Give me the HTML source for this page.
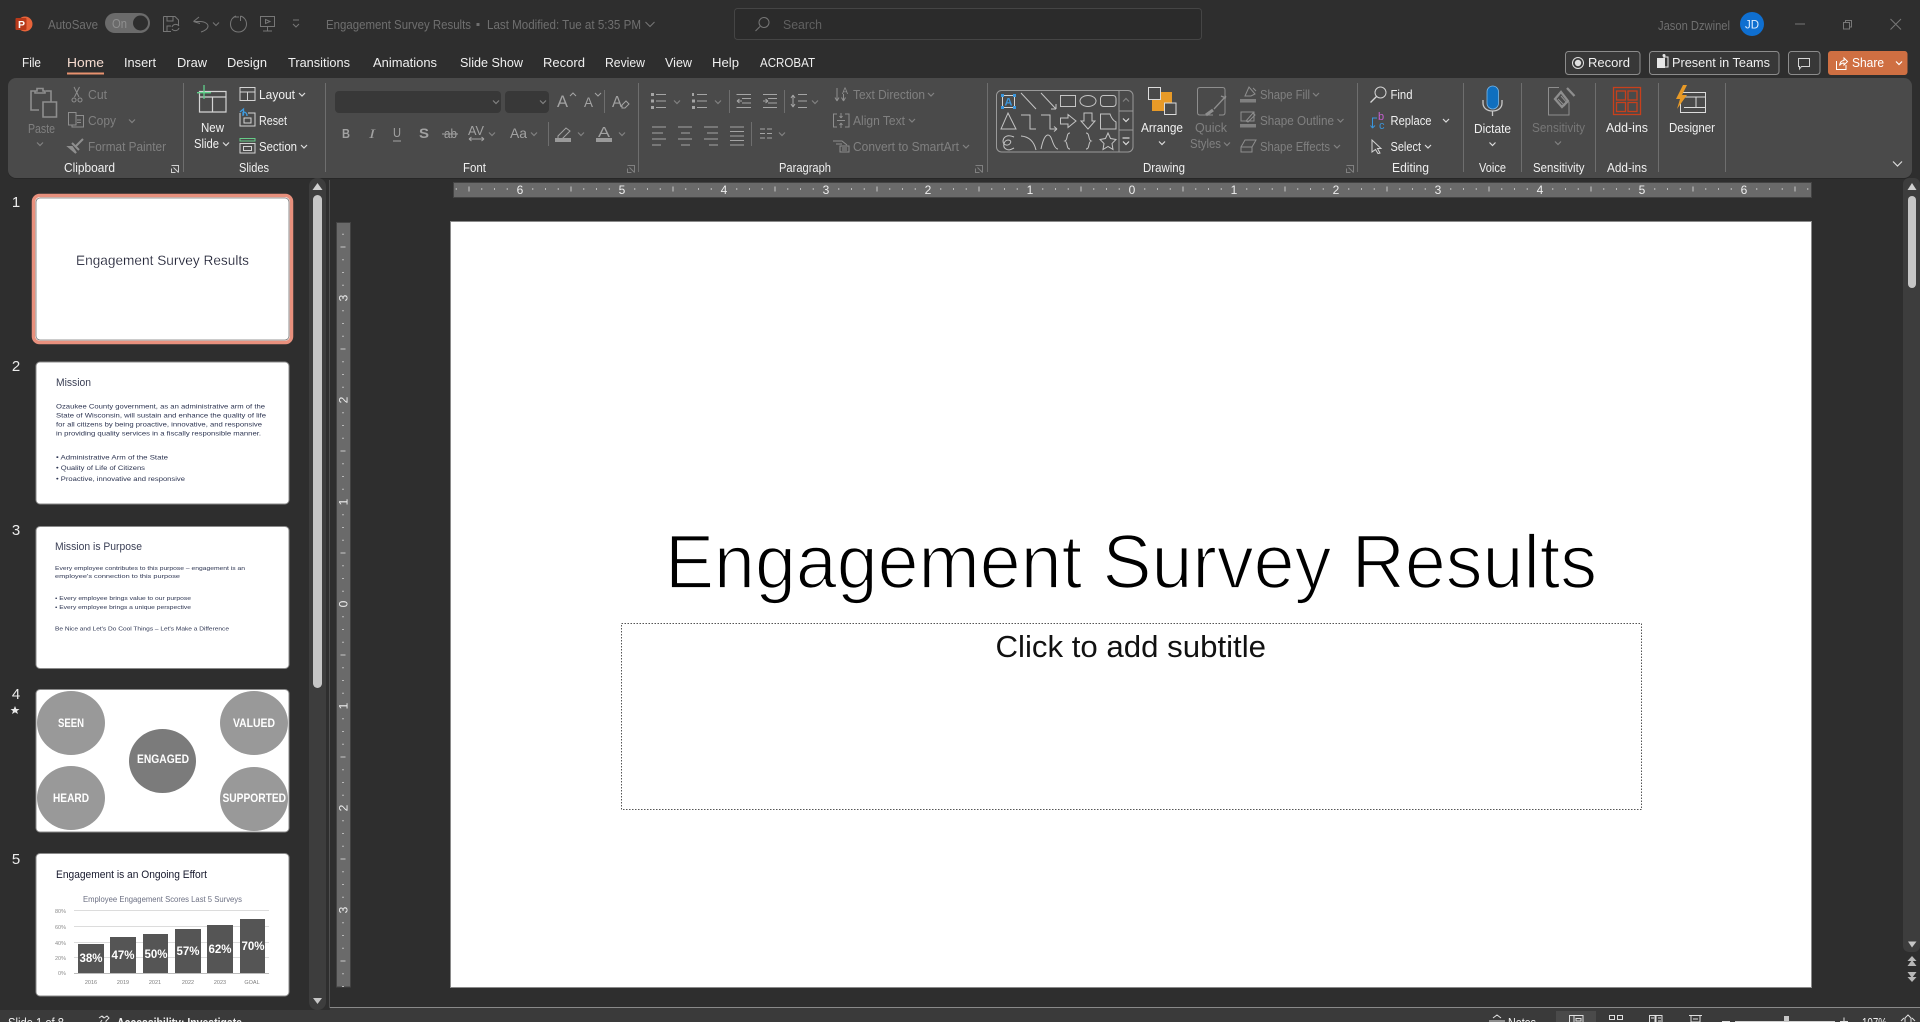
<!DOCTYPE html>
<html lang="en"><head><meta charset="utf-8"><title>Engagement Survey Results - PowerPoint</title>
<style>
html,body{margin:0;padding:0;width:1920px;height:1022px;overflow:hidden;background:#2e2e2e}
svg{display:block;font-family:"Liberation Sans",sans-serif}
text{white-space:pre}
.t text,text.t{fill:#f0f0f0;font-size:12.5px}
.d text,text.d{fill:#808080;font-size:12.5px}
.dl text{fill:#a2a2a2;font-size:12.5px}
.h text{fill:#6f6f6f;font-size:12.5px}
.tb text{fill:#f0f0f0;font-size:12.5px}
.ie{fill:none;stroke:#d4d4d4;stroke-width:1}
.id{fill:none;stroke:#8e8e8e;stroke-width:1}
.il{fill:none;stroke:#a4a4a4;stroke-width:1}
.ih{fill:none;stroke:#777;stroke-width:1}
.cw{fill:none;stroke:#dcdcdc;stroke-width:1.2}
.cd{fill:none;stroke:#828282;stroke-width:1.2}
.r text{fill:#ededed;font-size:12px;text-anchor:middle}
.th text{fill:#2b3350;font-size:6.6px}
.cl text{fill:#fff;font-size:11.5px;font-weight:bold}
</style></head><body>
<svg width="1920" height="1022" viewBox="0 0 1920 1022" xmlns="http://www.w3.org/2000/svg">
<defs>
<path id="c" d="M-3-1.5 0 1.5 3-1.5"/>
<path id="l" d="M0 0H7V7M7 7 2 2M0 3V7H4" />
<pattern id="hr" patternUnits="userSpaceOnUse" x="1132" y="182" width="102" height="15">
<rect x="12.25" y="6" width="1" height="2" fill="#b8b8b8"/><rect x="25" y="6" width="1" height="2" fill="#b8b8b8"/><rect x="37.75" y="6" width="1" height="2" fill="#b8b8b8"/><rect x="50.5" y="4.5" width="1" height="5" fill="#c8c8c8"/><rect x="63.25" y="6" width="1" height="2" fill="#b8b8b8"/><rect x="76" y="6" width="1" height="2" fill="#b8b8b8"/><rect x="88.75" y="6" width="1" height="2" fill="#b8b8b8"/>
</pattern>
<pattern id="vr" patternUnits="userSpaceOnUse" x="336" y="604" width="15" height="102">
<rect x="6" y="12.25" width="2" height="1" fill="#b8b8b8"/><rect x="6" y="25" width="2" height="1" fill="#b8b8b8"/><rect x="6" y="37.75" width="2" height="1" fill="#b8b8b8"/><rect x="4.5" y="50.5" width="5" height="1" fill="#c8c8c8"/><rect x="6" y="63.25" width="2" height="1" fill="#b8b8b8"/><rect x="6" y="76" width="2" height="1" fill="#b8b8b8"/><rect x="6" y="88.75" width="2" height="1" fill="#b8b8b8"/>
</pattern>
</defs>

<rect width="1920" height="1022" fill="#2e2e2e"/>

<!-- Title bar -->
<circle cx="25" cy="24" r="7.5" fill="#e8643a"/><rect x="15.5" y="18" width="11" height="12" rx="1" fill="#b7391a"/>
<text x="18" y="28" font-size="10.5" font-weight="bold" fill="#fff">P</text>
<g class="h"><text x="48" y="29" textLength="50" lengthAdjust="spacingAndGlyphs">AutoSave</text></g>
<rect x="105" y="13" width="45" height="20" rx="10" fill="#6b6b6b"/><circle cx="140.5" cy="23" r="7.5" fill="#2e2e2e"/>
<text x="112" y="28" font-size="12.5" fill="#8f8f8f" textLength="15" lengthAdjust="spacingAndGlyphs">On</text>
<g class="ih">
<path d="M163.5 16.5H175L178.5 20V26M163.5 16.5V31.500H171M167 16.5V21H173V16.500M167 31V26H171"/>
<path d="M172 27A4 4 0 0 1 179 26M179 28A4 4 0 0 1 172 29"/>
<path d="M193.500 21.500 199 17M193.500 21.500 200 23.500M194 21.500H200C205 21.500 208 24 208 26C208 29 204 31 201 32"/>
<use href="#c" x="216" y="24"/>
<path d="M239 17H233.500M236 16C232 17.500 230.500 21 230.500 24C230.500 29 234 32 238.500 32C243.500 32 246.500 28 246.500 24C246.500 20 244 17 240.500 16M240.500 16V21"/>
<path d="M260.500 16.500H274.500V26.500H260.500ZM267.500 26.500V31M263 31H272M265.500 19.500 270 21.500 265.500 23.500Z"/>
<path d="M293 20H299M293 24 296 27 299 24"/>
</g>
<g class="h"><text x="326" y="29" textLength="145" lengthAdjust="spacingAndGlyphs">Engagement Survey Results</text>
<text x="487" y="29" textLength="154" lengthAdjust="spacingAndGlyphs">Last Modified: Tue at 5:35 PM</text></g>
<rect x="476.500" y="23" width="3" height="3" fill="#6f6f6f"/>
<path class="ih" d="M645.500 22 650 26.500 654.500 22"/>
<rect x="734.500" y="8.500" width="467" height="31" rx="3" fill="#2b2b2b" stroke="#454545"/>
<circle cx="764" cy="22.500" r="5" class="ih"/><path class="ih" d="M760 26.500 755.500 31"/>
<g class="h"><text x="783" y="29" textLength="39" lengthAdjust="spacingAndGlyphs" style="fill:#606060">Search</text></g>
<g class="h"><text x="1658" y="30" textLength="72" lengthAdjust="spacingAndGlyphs">Jason Dzwinel</text></g>
<circle cx="1752" cy="24" r="12" fill="#0f6fd0"/><text x="1752" y="28.500" font-size="11.500" fill="#dfeeff" text-anchor="middle">JD</text>
<path class="ih" d="M1795 24H1805M1843.500 22.500H1849.500V29H1843.500ZM1845.500 22.500V20.500H1851.500V27H1849.500M1890.500 19 1901 29.500M1901 19 1890.500 29.500"/>

<!-- Tabs -->
<g class="tb">
<text x="22" y="67" textLength="19" lengthAdjust="spacingAndGlyphs">File</text>
<text x="67" y="67" textLength="37" lengthAdjust="spacingAndGlyphs" style="fill:#f5dcd0">Home</text>
<text x="124" y="67" textLength="32" lengthAdjust="spacingAndGlyphs">Insert</text>
<text x="177" y="67" textLength="30" lengthAdjust="spacingAndGlyphs">Draw</text>
<text x="227" y="67" textLength="40" lengthAdjust="spacingAndGlyphs">Design</text>
<text x="288" y="67" textLength="62" lengthAdjust="spacingAndGlyphs">Transitions</text>
<text x="373" y="67" textLength="64" lengthAdjust="spacingAndGlyphs">Animations</text>
<text x="460" y="67" textLength="63" lengthAdjust="spacingAndGlyphs">Slide Show</text>
<text x="543" y="67" textLength="42" lengthAdjust="spacingAndGlyphs">Record</text>
<text x="605" y="67" textLength="40" lengthAdjust="spacingAndGlyphs">Review</text>
<text x="665" y="67" textLength="27" lengthAdjust="spacingAndGlyphs">View</text>
<text x="712" y="67" textLength="27" lengthAdjust="spacingAndGlyphs">Help</text>
<text x="760" y="67" textLength="55" lengthAdjust="spacingAndGlyphs">ACROBAT</text>
</g>
<rect x="67" y="72.500" width="37" height="2" fill="#e8926f"/>

<!-- Top right buttons -->
<rect x="1565.500" y="51.500" width="74.500" height="23" rx="3" fill="#383838" stroke="#8c8c8c"/>
<circle cx="1578" cy="63" r="5.500" fill="none" stroke="#e0e0e0"/><circle cx="1578" cy="63" r="3.200" fill="#e0e0e0"/>
<rect x="1649.500" y="51.500" width="129.500" height="23" rx="3" fill="#383838" stroke="#8c8c8c"/>
<rect x="1657" y="58" width="8" height="10" fill="#e6e6e6"/><rect x="1664" y="57" width="4" height="10" fill="none" stroke="#e6e6e6"/><circle cx="1664" cy="55.500" r="1.500" fill="#e6e6e6"/>
<rect x="1788.500" y="51.500" width="31.500" height="23" rx="3" fill="#383838" stroke="#8c8c8c"/>
<path class="ie" d="M1798.500 58.500H1809.500V66.500H1801.500L1799.500 69V66.500H1798.500Z"/>
<rect x="1828" y="51" width="79.500" height="24" rx="3" fill="#cf6f42"/>
<path fill="none" stroke="#fff" d="M1836.500 61V69.500H1846V65M1839.500 65.500C1840 62.500 1841.500 60.500 1844 60.500V58L1847.500 61.500 1844 65V63C1842 63 1840.500 64 1839.500 65.500Z"/>
<use href="#c" x="1899" y="63" fill="none" stroke="#fff" stroke-width="1.2"/>
<g class="tb"><text x="1588" y="67" textLength="42" lengthAdjust="spacingAndGlyphs">Record</text>
<text x="1672" y="67" textLength="98" lengthAdjust="spacingAndGlyphs">Present in Teams</text>
<text x="1852" y="67" textLength="32" lengthAdjust="spacingAndGlyphs" style="fill:#fff">Share</text></g>

<!-- Ribbon -->
<rect x="8" y="79" width="1904" height="100" rx="8" fill="#232323" opacity=".6"/>
<rect x="8" y="78" width="1904" height="100" rx="8" fill="#4a4a4a"/>
<g fill="#6e6e6e">
<rect x="183" y="83" width="1" height="89"/><rect x="325" y="83" width="1" height="89"/><rect x="638" y="83" width="1" height="89"/><rect x="987" y="83" width="1" height="89"/><rect x="1357" y="83" width="1" height="89"/><rect x="1463" y="83" width="1" height="89"/><rect x="1521" y="83" width="1" height="89"/><rect x="1595" y="83" width="1" height="89"/><rect x="1658" y="83" width="1" height="89"/><rect x="1725" y="83" width="1" height="89"/>
<rect x="604" y="90" width="1" height="23"/><rect x="548" y="122" width="1" height="24"/><rect x="729" y="90" width="1" height="23"/><rect x="784" y="90" width="1" height="23"/><rect x="751" y="122" width="1" height="24"/>
</g>

<!-- Group labels -->
<g class="t">
<text x="64" y="172" textLength="51" lengthAdjust="spacingAndGlyphs">Clipboard</text>
<text x="239" y="172" textLength="30" lengthAdjust="spacingAndGlyphs">Slides</text>
<text x="463" y="172" textLength="23" lengthAdjust="spacingAndGlyphs">Font</text>
<text x="779" y="172" textLength="52" lengthAdjust="spacingAndGlyphs">Paragraph</text>
<text x="1143" y="172" textLength="42" lengthAdjust="spacingAndGlyphs">Drawing</text>
<text x="1392" y="172" textLength="37" lengthAdjust="spacingAndGlyphs">Editing</text>
<text x="1479" y="172" textLength="27" lengthAdjust="spacingAndGlyphs">Voice</text>
<text x="1533" y="172" textLength="51.500" lengthAdjust="spacingAndGlyphs">Sensitivity</text>
<text x="1607" y="172" textLength="40" lengthAdjust="spacingAndGlyphs">Add-ins</text>
</g>
<use href="#l" x="171.500" y="165.500" fill="none" stroke="#d0d0d0"/>
<g fill="none" stroke="#808080"><use href="#l" x="627.500" y="165.500"/><use href="#l" x="975.500" y="165.500"/><use href="#l" x="1346.500" y="165.500"/></g>

<!-- Clipboard -->
<g class="id" stroke-width="1.2">
<path stroke-width="1.6" d="M46 91H51V102M39 110H31V91H37M37 91V88.500H43V91H45V93H35V91ZM43 102H56.500V117H43Z"/>
<path d="M74 87 79 97M79.500 87 74.500 97"/><circle cx="74" cy="100" r="2"/><circle cx="80" cy="100" r="2"/>
<path d="M68.500 112.500H76V125H68.500ZM76.500 115.500H83.500V127H72V125M77 120H81M77 122.500H81"/>
<path stroke-width="2" d="M83 139 75 147M72 143 79 150M69 147 76 153 72 147Z"/>
</g>
<g class="d">
<text x="28" y="133" textLength="27" lengthAdjust="spacingAndGlyphs">Paste</text>
<text x="88" y="99" textLength="19" lengthAdjust="spacingAndGlyphs">Cut</text>
<text x="88" y="125" textLength="28" lengthAdjust="spacingAndGlyphs">Copy</text>
<text x="88" y="151" textLength="78" lengthAdjust="spacingAndGlyphs">Format Painter</text>
</g>
<g class="cd"><use href="#c" x="40" y="144"/><use href="#c" x="132" y="121"/></g>

<!-- Slides -->
<g class="ie">
<path stroke-width="1.200" d="M199.500 91.500H226V112H199.500ZM199.500 97H226M212.500 97V112"/>
<path d="M240 87.500H255V100.500H240ZM240 92H255M247.500 92V100.500"/>
<path d="M240 113V126H255V113H248M244 118H251V123H244Z"/>
<path d="M240 143.500H255V153H240ZM243.500 146.500H251.500V150.500H243.500Z"/>
</g>
<path fill="none" stroke="#5fd08a" stroke-width="1.300" d="M197 92.700H211M204 85V99"/>
<path fill="none" stroke="#3d9be0" stroke-width="1.300" d="M243 112V116M240 112 243.500 109 243.500 115M243.500 112C246 112 247 114 247 116"/>
<rect x="240" y="138.500" width="15" height="2.500" fill="none" stroke="#66cc88"/>
<g class="t">
<text x="201" y="132" textLength="23" lengthAdjust="spacingAndGlyphs">New</text>
<text x="194" y="148" textLength="25" lengthAdjust="spacingAndGlyphs">Slide</text>
<text x="259" y="99" textLength="36" lengthAdjust="spacingAndGlyphs">Layout</text>
<text x="259" y="125" textLength="28" lengthAdjust="spacingAndGlyphs">Reset</text>
<text x="259" y="151" textLength="38" lengthAdjust="spacingAndGlyphs">Section</text>
</g>
<g class="cw"><use href="#c" x="226" y="144"/><use href="#c" x="302" y="94.500"/><use href="#c" x="304" y="146.500"/></g>

<!-- Font -->
<rect x="335" y="91" width="166" height="22" rx="4" fill="#383838"/><rect x="505" y="91" width="44" height="22" rx="4" fill="#383838"/>
<g class="cd">
<use href="#c" x="496" y="102"/><use href="#c" x="543" y="102"/>
<use href="#c" x="492" y="134"/><use href="#c" x="534" y="134"/><use href="#c" x="581" y="134"/><use href="#c" x="622" y="134"/>
</g>
<g class="dl">
<text x="557" y="107" style="font-size:17px" textLength="11" lengthAdjust="spacingAndGlyphs">A</text>
<text x="584" y="107" style="font-size:14px" textLength="9" lengthAdjust="spacingAndGlyphs">A</text>
<text x="612" y="107" style="font-size:16px" textLength="10" lengthAdjust="spacingAndGlyphs">A</text>
<text x="342" y="138" style="font-size:13px;font-weight:bold" textLength="8" lengthAdjust="spacingAndGlyphs">B</text>
<text x="369" y="138" style="font-size:13px;font-style:italic;font-family:'Liberation Serif',serif" textLength="6" lengthAdjust="spacingAndGlyphs">I</text>
<text x="393" y="137" style="font-size:13px" textLength="8" lengthAdjust="spacingAndGlyphs">U</text>
<text x="419" y="138" style="font-size:14px;font-weight:bold" textLength="10" lengthAdjust="spacingAndGlyphs">S</text>
<text x="444" y="138" style="font-size:13px" textLength="13" lengthAdjust="spacingAndGlyphs">ab</text>
<text x="468" y="135" style="font-size:13px" textLength="16" lengthAdjust="spacingAndGlyphs">AV</text>
<text x="510" y="138" style="font-size:14px" textLength="17" lengthAdjust="spacingAndGlyphs">Aa</text>
<text x="598" y="137" style="font-size:15px" textLength="12" lengthAdjust="spacingAndGlyphs">A</text>
</g>
<g class="il">
<path d="M570 96 573 93 576 96M595 93 598 96 601 93M393 141H401M442 134H458M469 139H484M469 139 471.500 137M469 139 471.500 141M484 139 481.500 137M484 139 481.500 141"/>
<path d="M622 105 626 101 629 104 625 108H622Z"/>
<path d="M558 136 566 128 570 131 562 139H558Z"/>
</g>
<rect x="555" y="138" width="16" height="4" fill="#9a9a9a"/><rect x="596" y="138" width="16" height="4" fill="#9a9a9a"/>

<!-- Paragraph -->
<g class="il">
<path d="M656 94.500H666M656 101H666M656 107.500H666M697 94.500H707M697 101H707M697 107.500H707M736.500 94.500H751M742 98.500H751M742 103H751M736.500 107.500H751M737 101H742M737 101 739.500 99M737 101 739.500 103M763 94.500H777M768 98.500H777M768 103H777M763 107.500H777M763 101H768M768 101 765.500 99M768 101 765.500 103M798 94.500H807M798 101H807M798 107.500H807M793 95V107M793 95 791 98M793 95 795 98M793 107 791 104M793 107 795 104"/>
<path d="M652 127H666M652 133H663M652 139H666M652 145H661M678 127H692M681 133H690M678 139H692M681 145H690M704 127H718M707 133H718M704 139H718M709 145H718M730 127H744M730 131.500H744M730 136H744M730 140.500H744M730 145H744M760 129H765M760 133.500H765M760 138H765M767 129H772M767 133.500H772M767 138H772"/>
</g>
<g class="id">
<path d="M837 88V101M837 101 835 97.500M837 101 839 97.500M843.500 94V101M843.500 101 841.500 97.500M843.500 101 845.500 97.500"/>
<path d="M837 114H833.500V127H837M845 114H849V127H845M837 120.500H845M841 113V118M841 118 839.500 116M841 118 842.500 116M841 128V123M841 123 839.500 125M841 123 842.500 125"/>
<path d="M833 141H842L847 145M836 144H842M840 146H849V152H840ZM842 148H847M842 150H847"/>
</g>
<g fill="#a4a4a4"><rect x="651" y="93" width="3" height="3"/><rect x="651" y="99.500" width="3" height="3"/><rect x="651" y="106" width="3" height="3"/><rect x="692" y="93" width="2" height="3"/><rect x="692" y="99.500" width="3" height="3"/><rect x="692" y="106" width="3" height="3"/></g>
<text x="842" y="94" font-size="9" fill="#8e8e8e">A</text>
<g class="cd"><use href="#c" x="677" y="102"/><use href="#c" x="718" y="102"/><use href="#c" x="815" y="102"/><use href="#c" x="782" y="134"/><use href="#c" x="931" y="94.500"/><use href="#c" x="912" y="120.500"/><use href="#c" x="966" y="146.500"/></g>
<g class="d">
<text x="853" y="99" textLength="72" lengthAdjust="spacingAndGlyphs">Text Direction</text>
<text x="853" y="125" textLength="52" lengthAdjust="spacingAndGlyphs">Align Text</text>
<text x="853" y="151" textLength="106" lengthAdjust="spacingAndGlyphs">Convert to SmartArt</text>
</g>

<!-- Shapes gallery -->
<rect x="996.500" y="90.500" width="136.500" height="61.500" rx="5" fill="none" stroke="#9a9a9a"/>
<path d="M1119 90.500V152M1119 111H1133M1119 130H1133" stroke="#9a9a9a" fill="none"/>
<g class="cd"><use href="#c" x="1126" y="100" transform="rotate(180 1126 100)"/></g>
<g class="cw"><use href="#c" x="1126" y="120"/><use href="#c" x="1126" y="143"/><path d="M1122.500 138H1129.500"/></g>
<rect x="1002.500" y="95.500" width="12" height="12" fill="none" stroke="#d4d4d4"/>
<g fill="#3a96dd"><rect x="1001" y="94" width="3" height="3"/><rect x="1013" y="94" width="3" height="3"/><rect x="1001" y="106" width="3" height="3"/><rect x="1013" y="106" width="3" height="3"/></g>
<text x="1008.500" y="105.500" text-anchor="middle" font-size="11" font-weight="bold" fill="#3a96dd">A</text>
<g class="ie" style="stroke:#c4c4c4">
<path d="M1021 93 1036 109M1041 93 1056 109M1056 109V104M1056 109H1051"/>
<rect x="1060.500" y="95.500" width="15" height="11"/><ellipse cx="1088" cy="101" rx="8" ry="5.500"/><rect x="1100.500" y="95.500" width="15.500" height="11" rx="3"/>
<path d="M1008 113 1016 129H1001ZM1021 115H1030V129H1036M1041 115H1050V129H1057M1057 129 1054 126.500M1057 129 1054 131.500M1060.500 118H1068V114.500L1076 121 1068 127.500V124H1060.500ZM1084 113H1092V121H1095L1088 129 1081 121H1084ZM1100.500 114H1110Q1112 120 1116 122V129H1100.500Z"/>
<path d="M1014 137C1005 133 1001 140 1004 144C1009 148 1014 140 1008 140C1004 140 1002 147 1006 149C1009 151 1012 149 1014 148M1021 136Q1033 137 1036 150M1041 149C1045 130 1050 134 1052 140S1056 149 1058 149M1070 133C1066 133 1068 140 1065 141C1068 142 1066 149 1070 149M1086 133C1090 133 1088 140 1091 141C1088 142 1090 149 1086 149M1108 133 1110.500 138.500 1116 139.500 1112 143.500 1113 149.500 1108 146.500 1103 149.500 1104 143.500 1100 139.500 1105.500 138.500Z"/>
</g>

<!-- Drawing right -->
<rect x="1152" y="92" width="20" height="19" fill="#e89a27"/>
<rect x="1148.500" y="87.500" width="12" height="12" fill="#4a4a4a" stroke="#dcdcdc"/>
<rect x="1164.500" y="103" width="11.500" height="11.500" fill="#4a4a4a" stroke="#dcdcdc"/>
<g class="t"><text x="1141" y="132" textLength="42" lengthAdjust="spacingAndGlyphs">Arrange</text></g>
<g class="cw"><use href="#c" x="1162" y="143"/></g>
<g class="id">
<path d="M1213 115H1200Q1197.500 115 1197.500 112.500V90Q1197.500 87.500 1200 87.500H1222.500Q1225 87.500 1225 90V100M1225 100V112.500Q1225 115 1222.500 115H1219"/>
<path stroke-width="1.300" d="M1226 96 1214 109M1221 96 1226 98"/>
<path stroke-width="3" d="M1213 110 1206 115"/>
<path d="M1245 96 1249 87 1255 94 1251 96ZM1253 88 1256 91"/>
<path d="M1241 112H1254V121H1241ZM1246 121 1253 113 1255 115 1248 122Z"/>
<path d="M1241 147 1245 140H1256L1252 147V152H1241ZM1241 147H1252"/>
</g>
<rect x="1240" y="99" width="16" height="3.500" fill="#808080"/><rect x="1240" y="124" width="16" height="3.500" fill="#808080"/>
<g class="d">
<text x="1195" y="132" textLength="32" lengthAdjust="spacingAndGlyphs">Quick</text>
<text x="1190" y="148" textLength="31" lengthAdjust="spacingAndGlyphs">Styles</text>
<text x="1260" y="99" textLength="50" lengthAdjust="spacingAndGlyphs">Shape Fill</text>
<text x="1260" y="125" textLength="74" lengthAdjust="spacingAndGlyphs">Shape Outline</text>
<text x="1260" y="151" textLength="70" lengthAdjust="spacingAndGlyphs">Shape Effects</text>
</g>
<g class="cd"><use href="#c" x="1227" y="144"/><use href="#c" x="1316" y="94.500"/><use href="#c" x="1340.500" y="120.500"/><use href="#c" x="1337" y="146.500"/></g>

<!-- Editing -->
<g class="ie">
<circle cx="1380.500" cy="92.500" r="5.500"/><path d="M1376.500 96.500 1370.500 102.500" stroke-width="1.300"/>
<path d="M1372 152V140L1381 148.500H1377.500L1380 153 1378 153.500 1375.500 149.500Z"/>
</g>
<text x="1378" y="120" font-size="11" fill="#c65fd0">b</text><text x="1379" y="129" font-size="11" fill="#3a96dd">c</text>
<path fill="none" stroke="#3a96dd" d="M1377 118H1372.500V128M1372.500 128 1370.500 125.500M1372.500 128 1375 125.500"/>
<g class="t">
<text x="1390.500" y="99" textLength="22" lengthAdjust="spacingAndGlyphs">Find</text>
<text x="1390.500" y="125" textLength="41" lengthAdjust="spacingAndGlyphs">Replace</text>
<text x="1390.500" y="151" textLength="30.500" lengthAdjust="spacingAndGlyphs">Select</text>
<text x="1474" y="133" textLength="37" lengthAdjust="spacingAndGlyphs">Dictate</text>
<text x="1606" y="132" textLength="42" lengthAdjust="spacingAndGlyphs">Add-ins</text>
<text x="1669" y="132" textLength="46" lengthAdjust="spacingAndGlyphs">Designer</text>
</g>
<g class="cw"><use href="#c" x="1446" y="120.500"/><use href="#c" x="1428" y="146.500"/><use href="#c" x="1492.500" y="144"/></g>

<!-- Dictate -->
<rect x="1487" y="86" width="11.500" height="23" rx="5.750" fill="#0f6fbf" stroke="#7ab7e8" stroke-width=".8"/>
<path fill="none" stroke="#c8c8c8" stroke-width="1.300" d="M1483 100V103C1483 108 1487 111 1492.500 111S1502 108 1502 103V100M1492.500 111V116"/>

<!-- Sensitivity -->
<g class="id">
<path d="M1548.500 87.500H1559M1548.500 87.500V115H1569V102"/>
<path stroke-width="2.300" d="M1567 88 1574.500 96M1561 92 1568 101 1562 107 1555 99Z"/>
<path d="M1558 99 1565 106M1561 96 1567 103"/>
</g>
<g class="d"><text x="1532" y="132" textLength="53" lengthAdjust="spacingAndGlyphs" style="fill:#777">Sensitivity</text></g>
<g class="cd"><use href="#c" x="1558" y="143"/></g>

<!-- Add-ins -->
<g fill="none" stroke="#c8401c" stroke-width="1.300">
<rect x="1613.500" y="87.500" width="27" height="27"/><rect x="1616.500" y="91" width="9" height="9"/><rect x="1628" y="91" width="9" height="9"/><rect x="1616.500" y="102.500" width="9" height="9"/><rect x="1628" y="102.500" width="9" height="9"/>
</g>

<!-- Designer -->
<g fill="none" stroke="#dcdcdc"><rect x="1680.500" y="92.500" width="25" height="20"/><path d="M1680.500 97H1705.500M1696 97V107.500M1684 107.500H1705.500"/></g>
<path d="M1683 85 1676 99H1680L1677 109 1687 95H1682L1687 85Z" fill="#e89a27"/>

<path class="cw" d="M1893 161.500 1897.500 166 1902 161.500" stroke-width="1.300"/>

<!-- Left panel scrollbar -->
<rect x="309" y="178" width="17" height="832" rx="8" fill="#3d3d3d"/>
<path d="M312.500 190 317.500 183 322.500 190Z" fill="#cfcfcf"/>
<rect x="313" y="195" width="9" height="493" rx="4.500" fill="#c6c6c6"/>
<path d="M313 998H322L317.500 1004Z" fill="#c6c6c6"/>
<rect x="329" y="180" width="1" height="828" fill="#4f4f4f"/>

<!-- Thumbnails -->
<g fill="#ececec" font-size="15" text-anchor="middle">
<text x="16" y="207">1</text><text x="16" y="371">2</text><text x="16" y="535">3</text><text x="16" y="699">4</text><text x="16" y="864">5</text>
</g>
<path d="M15 706 16.300 709H19.500L17 711 18 714 15 712.200 12 714 13 711 10.500 709H13.700Z" fill="#e8e8e8"/>

<rect x="33.500" y="195.500" width="258" height="147" rx="6" fill="#fff" stroke="#e8907d" stroke-width="3.500"/>
<rect x="36" y="198" width="253" height="142" rx="4" fill="#fff" stroke="#777" stroke-width=".8"/>
<text x="76" y="265" font-size="14" fill="#16182c" stroke="#fff" stroke-width=".2" textLength="173" lengthAdjust="spacingAndGlyphs">Engagement Survey Results</text>

<rect x="36" y="362" width="253" height="142" rx="4" fill="#fff" stroke="#8a8a8a"/>
<text x="56" y="386" font-size="11" fill="#3a3f55" textLength="35" lengthAdjust="spacingAndGlyphs">Mission</text>
<g class="th">
<text x="56" y="408.500" textLength="209" lengthAdjust="spacingAndGlyphs">Ozaukee County government, as an administrative arm of the</text>
<text x="56" y="417.500" textLength="210" lengthAdjust="spacingAndGlyphs">State of Wisconsin, will sustain and enhance the quality of life</text>
<text x="56" y="426.500" textLength="206" lengthAdjust="spacingAndGlyphs">for all citizens by being proactive, innovative, and responsive</text>
<text x="56" y="435.500" textLength="205" lengthAdjust="spacingAndGlyphs">in providing quality services in a fiscally responsible manner.</text>
<text x="56" y="459.500" textLength="112" lengthAdjust="spacingAndGlyphs">• Administrative Arm of the State</text>
<text x="56" y="470" textLength="89" lengthAdjust="spacingAndGlyphs">• Quality of Life of Citizens</text>
<text x="56" y="481" textLength="129" lengthAdjust="spacingAndGlyphs">• Proactive, innovative and responsive</text>
</g>

<rect x="36" y="526.500" width="253" height="142" rx="4" fill="#fff" stroke="#8a8a8a"/>
<text x="55" y="550" font-size="11" fill="#3a3f55" textLength="87" lengthAdjust="spacingAndGlyphs">Mission is Purpose</text>
<g class="th">
<text x="55" y="570" style="font-size:5.500px" textLength="190" lengthAdjust="spacingAndGlyphs">Every employee contributes to this purpose – engagement is an</text>
<text x="55" y="578" style="font-size:5.500px" textLength="125" lengthAdjust="spacingAndGlyphs">employee's connection to this purpose</text>
<text x="55" y="600" style="font-size:5.500px" textLength="136" lengthAdjust="spacingAndGlyphs">• Every employee brings value to our purpose</text>
<text x="55" y="609" style="font-size:5.500px" textLength="136" lengthAdjust="spacingAndGlyphs">• Every employee brings a unique perspective</text>
<text x="55" y="630.500" style="font-size:5.500px" textLength="174" lengthAdjust="spacingAndGlyphs">Be Nice and Let's Do Cool Things – Let's Make a Difference</text>
</g>

<rect x="36" y="689.500" width="253" height="142.500" rx="4" fill="#fff" stroke="#8a8a8a"/>
<g fill="#999"><ellipse cx="71" cy="723" rx="34" ry="32"/><ellipse cx="254" cy="723" rx="34" ry="32"/><ellipse cx="71" cy="798" rx="34" ry="32"/><ellipse cx="254" cy="799" rx="34" ry="32"/></g>
<ellipse cx="162.500" cy="761" rx="33.500" ry="32" fill="#7b7b7b"/>
<g class="cl">
<text x="58" y="727" textLength="26" lengthAdjust="spacingAndGlyphs">SEEN</text>
<text x="233" y="727" textLength="42" lengthAdjust="spacingAndGlyphs">VALUED</text>
<text x="53" y="802" textLength="36" lengthAdjust="spacingAndGlyphs">HEARD</text>
<text x="222.500" y="802" textLength="63.500" lengthAdjust="spacingAndGlyphs">SUPPORTED</text>
<text x="137" y="763" textLength="52" lengthAdjust="spacingAndGlyphs">ENGAGED</text>
</g>

<rect x="36" y="853.500" width="253" height="142.500" rx="4" fill="#fff" stroke="#8a8a8a"/>
<text x="56" y="878" font-size="11" fill="#16182c" textLength="151" lengthAdjust="spacingAndGlyphs">Engagement is an Ongoing Effort</text>
<text x="83" y="902" font-size="8" fill="#6c7083" textLength="159" lengthAdjust="spacingAndGlyphs">Employee Engagement Scores Last 5 Surveys</text>
<g fill="#dcdcdc"><rect x="74" y="910" width="195" height="1"/><rect x="74" y="926" width="195" height="1"/><rect x="74" y="942" width="195" height="1"/><rect x="74" y="957" width="195" height="1"/></g>
<rect x="74" y="973" width="195" height="1" fill="#bbb"/>
<g fill="#8b8b8b" font-size="5.500">
<text x="55" y="913">80%</text><text x="55" y="929">60%</text><text x="55" y="945">40%</text><text x="55" y="960">20%</text><text x="58" y="975">0%</text>
</g>
<g fill="#555">
<rect x="78" y="944" width="26" height="29"/><rect x="110" y="937" width="26" height="36"/><rect x="143" y="934" width="25" height="39"/><rect x="175" y="929" width="26" height="44"/><rect x="207" y="925" width="26" height="48"/><rect x="240" y="919" width="25" height="54"/>
</g>
<g fill="#fff" font-size="11.500" font-weight="bold" text-anchor="middle">
<text x="91" y="962">38%</text><text x="123" y="959">47%</text><text x="156" y="958">50%</text><text x="188" y="955">57%</text><text x="220" y="953">62%</text><text x="253" y="950">70%</text>
</g>
<g fill="#7d7d7d" font-size="5.500" text-anchor="middle">
<text x="91" y="984">2016</text><text x="123" y="984">2019</text><text x="155" y="984">2021</text><text x="188" y="984">2022</text><text x="220" y="984">2023</text><text x="252" y="984">GOAL</text>
</g>

<!-- Rulers -->
<rect x="453.500" y="182.500" width="1358" height="15" fill="#6a6a6a" stroke="#434343"/>
<rect x="454" y="183" width="1357" height="14" fill="url(#hr)"/>
<g class="r">
<rect x="516" y="184" width="8" height="12" fill="#6a6a6a"/>
<text x="520" y="194">6</text><text x="622" y="194">5</text><text x="724" y="194">4</text><text x="826" y="194">3</text><text x="928" y="194">2</text><text x="1030" y="194">1</text><text x="1132" y="194">0</text><text x="1234" y="194">1</text><text x="1336" y="194">2</text><text x="1438" y="194">3</text><text x="1540" y="194">4</text><text x="1642" y="194">5</text><text x="1744" y="194">6</text>
</g>
<rect x="336.500" y="222.500" width="14" height="764.500" fill="#6a6a6a" stroke="#434343"/>
<rect x="337" y="223" width="13" height="764" fill="url(#vr)"/>
<g class="r">
<text transform="translate(347.500 298) rotate(-90)">3</text>
<text transform="translate(347.500 400) rotate(-90)">2</text>
<text transform="translate(347.500 502) rotate(-90)">1</text>
<text transform="translate(347.500 604) rotate(-90)">0</text>
<text transform="translate(347.500 706) rotate(-90)">1</text>
<text transform="translate(347.500 808) rotate(-90)">2</text>
<text transform="translate(347.500 910) rotate(-90)">3</text>
</g>

<!-- Slide -->
<rect x="450.500" y="221.500" width="1361" height="766" fill="#fff" stroke="#8a8a8a"/>
<text x="665" y="588" font-size="76" fill="#000" stroke="#fff" stroke-width="1.800" textLength="932" lengthAdjust="spacingAndGlyphs">Engagement Survey Results</text>
<rect x="621.500" y="623.500" width="1020" height="186" fill="none" stroke="#555" stroke-dasharray="1.500 1.500"/>
<text x="995.500" y="657" font-size="31" fill="#111" textLength="270.500" lengthAdjust="spacingAndGlyphs">Click to add subtitle</text>

<!-- Right scrollbar -->
<rect x="1903" y="178" width="17" height="774" rx="6" fill="#3d3d3d"/>
<path d="M1907.500 190 1912 183 1916.500 190Z" fill="#cfcfcf"/>
<rect x="1908" y="196" width="8" height="92" rx="4" fill="#c6c6c6"/>
<path d="M1908 941.500H1916.500L1912 947.500Z" fill="#c6c6c6"/>
<path d="M1912 956 1907.500 961H1916.500ZM1912 960 1907.500 966H1916.500Z" fill="#b8b8b8"/>
<path d="M1907.500 972H1916.500L1912 978ZM1907.500 977H1916.500L1912 982Z" fill="#b8b8b8"/>

<!-- Status bar -->
<rect x="330" y="1007" width="1590" height="1" fill="#8a8a8a"/>
<rect x="0" y="1010" width="1920" height="12" fill="#3a3a3a"/>
<rect x="330" y="1008" width="1590" height="14" fill="#3a3a3a"/>
<rect x="1556" y="1011" width="40" height="11" fill="#4a4a4a"/>
<g class="t">
<text x="8" y="1027" textLength="56" lengthAdjust="spacingAndGlyphs">Slide 1 of 8</text>
<text x="117" y="1027" textLength="125" lengthAdjust="spacingAndGlyphs" style="font-weight:bold">Accessibility: Investigate</text>
<text x="1508" y="1027" textLength="28" lengthAdjust="spacingAndGlyphs">Notes</text>
<text x="1862" y="1027" textLength="25" lengthAdjust="spacingAndGlyphs">107%</text>
</g>
<g class="ie" style="stroke:#e0e0e0">
<path d="M99 1018 102 1016 104 1018 107 1016 109 1018 106 1021V1024M103 1018V1016M102 1020 100 1023"/>
<path d="M1489 1021H1505M1493 1018 1497 1015 1501 1018"/>
<path d="M1569.500 1015.500H1583V1024H1569.500ZM1574 1015.500V1024M1576 1018.500H1581V1021H1576Z"/>
<rect x="1609.500" y="1015.500" width="5" height="4"/><rect x="1617.500" y="1015.500" width="5" height="4"/>
<path d="M1649.500 1015.500H1655V1024H1649.500ZM1656 1015.500H1662V1024H1656ZM1651 1018H1654M1658 1018H1661M1658 1021H1661"/>
<path d="M1689 1015.500H1702M1691 1015.500V1022H1700V1015.500M1693 1019H1698"/>
<path d="M1722 1021.500H1730M1840 1021.500H1848M1844 1017.500V1025"/>
<path d="M1901 1021 1904 1018M1915 1021 1912 1018M1908 1015 1905 1018V1024H1911V1018Z"/>
</g>
<rect x="1735" y="1021" width="100" height="1" fill="#d0d0d0"/>
<rect x="1784" y="1016" width="5" height="6" fill="#c6c6c6"/>
</svg>
</body></html>
